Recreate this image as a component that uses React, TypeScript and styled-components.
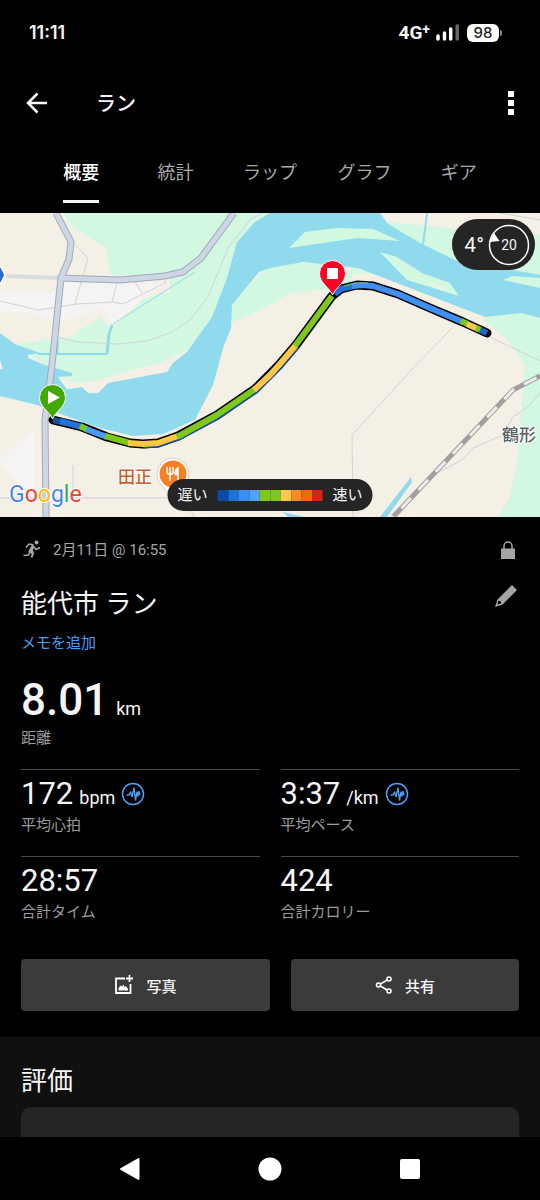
import React from 'react';
import styled, { createGlobalStyle } from 'styled-components';

const sans = `Roboto, "Noto Sans CJK JP", sans-serif`;

const GlobalStyle = createGlobalStyle`
  *, *::before, *::after { box-sizing: border-box; }
  body { margin: 0; background: #000; color: #f5f5f5; font-family: ${sans}; }
  button { font: inherit; color: inherit; border: 0; padding: 0; background: none; cursor: pointer; }
  svg { display: block; flex: none; }
  h1, h2, p, dl, dd, dt { margin: 0; font-weight: 400; }
`;

const Screen = styled.div`
  display: flex;
  flex-direction: column;
  min-height: 100vh;
`;

/* Status bar */
const StatusBar = styled.div`
  display: flex;
  align-items: center;
  justify-content: space-between;
  height: 66px;
  padding: 0 38px 0 29px;
`;
const Clock = styled.time`
  font: 600 18px/20px Inter, ${sans};
`;
const StatusIcons = styled.div`
  display: flex;
  align-items: center;
`;
const Network = styled.span`
  font-size: 19px;
  line-height: 20px;
  font-weight: 700;
  margin-right: 6px;
  sup { font-size: 14px; line-height: 0; vertical-align: 5px; }
`;
const Battery = styled.span`
  display: flex;
  align-items: center;
  gap: 1px;
  margin-left: 7px;
  &::after { content: ''; width: 2px; height: 6px; border-radius: 0 2px 2px 0; background: #888; }
`;
const BatteryLevel = styled.span`
  width: 32px;
  height: 18px;
  border-radius: 6px;
  background: #fff;
  color: #222;
  font: 500 15px/18px Inter, ${sans};
  text-align: center;
`;

/* App bar */
const AppBar = styled.header`
  display: flex;
  align-items: center;
  height: 74px;
  padding: 0 17px 0 25px;
`;
const IconButton = styled.button<{ $w?: number }>`
  display: grid;
  place-items: center;
  width: ${(p) => p.$w ?? 24}px;
  height: 24px;
`;
const AppTitle = styled.h1`
  flex: 1;
  margin-left: 47px;
  padding-top: 2px;
  font-size: 20px;
  line-height: 28px;
  font-weight: 500;
`;

/* Tabs */
const Tabs = styled.nav`
  display: grid;
  grid-template-columns: repeat(5, 1fr);
  height: 73px;
  padding: 18px 34px 10px;
`;
const Tab = styled.button<{ $active?: boolean }>`
  justify-self: center;
  display: flex;
  flex-direction: column;
  justify-content: space-between;
  font-size: 18px;
  line-height: 30px;
  font-weight: ${(p) => (p.$active ? 500 : 400)};
  color: ${(p) => (p.$active ? '#fff' : '#a9a9a9')};
  &::after {
    content: '';
    width: 100%;
    height: 3px;
    background: ${(p) => (p.$active ? '#f5f5f5' : 'transparent')};
  }
`;

/* Map */
const MapArea = styled.section`
  position: relative;
  height: 304px;
  overflow: hidden;
  background: #f5f0e5;
`;
const MapCanvas = styled.svg`
  width: 100%;
  height: 100%;
`;
const Weather = styled.div`
  position: absolute;
  top: 6px;
  right: 5px;
  display: flex;
  align-items: center;
  gap: 4px;
  height: 51px;
  padding: 0 5px 0 12px;
  border-radius: 26px;
  background: #252525;
  font-size: 21px;
`;
const Legend = styled.div`
  position: absolute;
  bottom: 6px;
  left: 50%;
  transform: translateX(-50%);
  display: flex;
  align-items: center;
  gap: 10px;
  height: 32px;
  padding: 0 10px;
  border-radius: 16px;
  background: #252525;
  font-size: 15px;
  line-height: 24px;
  white-space: nowrap;
`;
const Scale = styled.div`
  display: flex;
  width: 105px;
  height: 11px;
`;
const Swatch = styled.span<{ $c: string }>`
  flex: 1;
  background: ${(p) => p.$c};
`;

/* Activity summary */
const Summary = styled.main`
  padding: 21px 21px 26px;
`;
const Row = styled.div`
  display: flex;
  align-items: center;
`;
const DateText = styled.p`
  flex: 1;
  margin-left: 10px;
  font-size: 15px;
  line-height: 24px;
  color: #a6a6a6;
`;
const TitleRow = styled(Row)`
  align-items: flex-start;
  margin-top: 22px;
`;
const Title = styled.h2`
  flex: 1;
  padding-top: 2px;
  font-size: 26px;
  line-height: 36px;
`;
const MemoLink = styled.a`
  display: block;
  width: max-content;
  margin-top: 9px;
  font-size: 15px;
  line-height: 24px;
  color: #4d9ff5;
  text-decoration: none;
`;
const Metric = styled.div`
  display: flex;
  flex-direction: column-reverse;
`;
const Label = styled.dt`
  font-size: 15px;
  line-height: 24px;
  color: #9c9c9c;
`;
const Value = styled.dd<{ $big?: boolean }>`
  display: flex;
  align-items: baseline;
  gap: ${(p) => (p.$big ? 8 : 6)}px;
  font-size: ${(p) => (p.$big ? 44 : 31)}px;
  line-height: ${(p) => (p.$big ? 48 : 38)}px;
  font-weight: ${(p) => (p.$big ? 500 : 400)};
  svg { align-self: center; }
`;
const Unit = styled.span`
  font-size: 18px;
  line-height: 24px;
  font-weight: 400;
`;
const Distance = styled.dl`
  margin: 21px 0 19px;
  dt { margin-top: 2px; }
`;
const Metrics = styled.dl`
  display: grid;
  grid-template-columns: 1fr 1fr;
  column-gap: 21px;
`;
const Cell = styled(Metric)`
  padding: 5px 0 19px;
  border-top: 1px solid #4a4a4a;
`;
const Actions = styled.div`
  display: flex;
  gap: 21px;
  margin-top: 16px;
`;
const Action = styled.button<{ $grow: number }>`
  flex: ${(p) => p.$grow} 1 0;
  display: flex;
  align-items: center;
  justify-content: center;
  gap: 12px;
  height: 52px;
  border-radius: 4px;
  background: #3b3b3b;
  font-size: 15px;
  font-weight: 500;
`;

/* Rating section */
const Rating = styled.section`
  flex: 1;
  display: flex;
  flex-direction: column;
  padding: 24px 21px 0;
  background: #101010;
`;
const RatingTitle = styled(Title)`
  flex: none;
`;
const RatingCard = styled.div`
  flex: 1;
  min-height: 30px;
  margin-top: 8px;
  border-radius: 10px 10px 0 0;
  background: #252525;
`;

/* System navigation */
const SystemNav = styled.nav`
  display: flex;
  justify-content: center;
  align-items: center;
  gap: 116px;
  height: 63px;
`;

const scale = ['#0b4ba3', '#1a73d8', '#3a8ff5', '#52a2ff', '#7dc81b', '#7dc81b', '#fbca4b', '#fb8b2a', '#ee6908', '#d6211d'];

const track: [string, string][] = [
  ['#174f9f', '53,207 66,210'],
  ['#2173d8', '60,208 82,214'],
  ['#7dc81b', '80,213 88,217'],
  ['#4b9bf9', '86,216 107,224'],
  ['#7dc81b', '105,223 130,230'],
  ['#fbc846', '128,230 143,231 158,230 178,223'],
  ['#7dc81b', '177,224 217,202 255,176'],
  ['#fbc846', '254,177 270,162 279,152 296,132'],
  ['#7dc81b', '295,133 332,83'],
  ['#2173d8', '335,81 341,76 349,74 357,72'],
  ['#3f90f2', '352,73 362,72 373,73 398,81 430,95 463,109'],
  ['#7dc81b', '461,108 468,111'],
  ['#fbc846', '467,111 478,116'],
  ['#7dc81b', '476,115 481,117'],
  ['#1c66c4', '480,117 487,120'],
];
const route =
  '53,207 82,214 107,224 130,230 143,231 158,230 178,223 217,202 255,176 279,152 296,132 332,83 341,76 357,72 373,73 398,81 430,95 463,109 487,120';

function ActivityMap() {
  return (
    <MapCanvas viewBox="0 0 540 304" preserveAspectRatio="xMidYMid slice" role="img" aria-label="ルートマップ">
      <rect width="540" height="304" fill="#f5f0e5" />
      {/* urban land */}
      <path d="M0 79H57L64 70H170L143 84 113 115 100 95 57 111 33 100 0 99ZM35 214V285L10 262 0 252V246Z" fill="#f5f3f4" />
      {/* woodland */}
      <g fill="#d3f8e2">
        <path d="M63 0H270L237 40 213 104 187 137 160 150 90 169 72 171 45 152 17 130 68 125 101 104 110 117 143 86 170 78V64L110 62 106 35 72 14Z" />
        <path d="M232 92V110L270 92 290 80 320 77 358 76 345 50 270 50Z" />
        <path d="M388 9 452 15 540 22V80L420 60ZM485 100H540V304H498L510 284 517 247 525 152 510 130 485 107ZM350 50 380 60 350 62Z" />
      </g>
      {/* river */}
      <g fill="#90daee">
        <path d="M0 120 15 131 40 140 28 142V145L45 152 72 160V163L58 164 67 176 82 174 88 180 98 180 108 170 167 159 173 150 187 139 212 104 227 65 237 29 255 9 270 0H380L387 10 403 20 422 31 455 47 540 62V105L522 100 485 104 358 55 303 49 270 55 259 59 232 92 231 115 223 135 218 154 213 172 195 207 163 221 133 223 100 215 55 199 37 192 0 183Z" />
        <path d="M411 264 380 304H387L412 269ZM283 299 304 304H288Z" />
      </g>
      <path d="M0 147V156H3ZM90 171 160 150 168 148 166 158 108 169 97 179 88 179 82 174 67 176 60 167Z" fill="#f5f0e5" />
      <path d="M289 35 305 19 337 15 373 16 400 28 357 25ZM380 39 397 44 422 60 450 70 459 83 407 67ZM503 67 512 63 540 65V75Z" fill="#d3f8e2" />
      <path d="M424 68 434 71 444 75 443 78Z" fill="#f5f0e5" />
      <g fill="none" stroke="#90daee">
        <path d="M195 59 113 111" strokeWidth="1" />
        <path d="M112 112 109 121 107 141M57 126V140" strokeWidth="3" />
        <path d="M108 141H38" strokeWidth="2" />
        <path d="M427 0 423 32" strokeWidth="2" />
      </g>
      {/* minor roads */}
      <g fill="none" stroke="#d0d1db" strokeWidth="1">
        <path d="M75 32 88 45 75 91M0 88 38 97 77 91 113 89 123 91 165 70V67M117 70 112 89M135 69 142 80" />
        <path d="M57 124 78 129 117 131 147 128 170 120 190 107 208 84 228 35 250 7 262 0" />
        <path d="M73 252V285M0 285H170M191 298 194 304" />
        <path d="M452 115 416 152 352 222 353 304M490 124 540 148M500 0 540 7" />
        <path d="M540 180 527 195 513 204 503 222 473 235 462 247 437 260" />
      </g>
      {/* main roads */}
      <path d="M6 63 61 65" fill="none" stroke="#d9dadb" strokeWidth="4" />
      {[
        ['#9faabb', 7],
        ['#cdd7e3', 5],
      ].map(([c, w]) => (
        <path
          key={c}
          d="M56 0 71 29 69 46 61 65 52 152 45 207 46 304M61 65 120 67 165 63 183 59 201 45 234 0"
          fill="none"
          stroke={c}
          strokeWidth={w}
        />
      ))}
      <path d="M-6 54H1L5 62 1 70H-6Z" fill="#2b6cd0" stroke="#fff" strokeWidth="1.5" />
      {/* railway */}
      <path d="M540 163 513 177 393 304" fill="none" stroke="#a0a0a0" strokeWidth="5" />
      <path d="M540 163 513 177 393 304" fill="none" stroke="#ececec" strokeWidth="3" strokeDasharray="14 11" strokeDashoffset="-4" />
      {/* route */}
      <polyline points={route} fill="none" stroke="#000" strokeWidth="9" strokeLinejoin="round" strokeLinecap="round" />
      <polyline points="143,233 158,232 179,225 218,204 256,178 280,154 297,134" fill="none" stroke="#174f9f" strokeWidth="5" />
      {track.map(([c, p]) => (
        <polyline key={p} points={p} fill="none" stroke={c} strokeWidth="6" strokeLinejoin="round" />
      ))}
      <polyline points="344,73 357,70 368,70" fill="none" stroke="#7dc81b" strokeWidth="1" />
      {/* labels */}
      <g fontFamily={sans} paintOrder="stroke" stroke="#fff" strokeWidth="2" strokeLinejoin="round">
        <text x="118" y="270" fontSize="17" fontWeight="500" fill="#c8622a">田正</text>
        <text x="502" y="228" fontSize="17" fontWeight="500" fill="#5c6368">鶴形</text>
        <text x="9" y="289" fontSize="23" fontWeight="400">
          <tspan fill="#4285f4">G</tspan>
          <tspan fill="#ea4335">o</tspan>
          <tspan fill="#fbbc05">o</tspan>
          <tspan fill="#4285f4">g</tspan>
          <tspan fill="#34a853">l</tspan>
          <tspan fill="#ea4335">e</tspan>
        </text>
      </g>
      {/* restaurant */}
      <path d="M173 245a16 16 0 0 1 16 16c0 9-7 13-16 24-9-11-16-15-16-24a16 16 0 0 1 16-16Z" fill="#fff" stroke="#d5d0c8" strokeWidth="1" />
      <circle cx="173" cy="261" r="13.5" fill="#fb7f22" />
      <path d="M167 254v4.500a3 3 0 0 0 6 0V254M170 254v14M178 268v-13c-2.500 1-3 3-3 6.500h3" fill="none" stroke="#fff" strokeWidth="1.600" />
      <path d="M178 255c-2.500 1-3 3-3 6.500h3Z" fill="#fff" />
      {/* start and finish pins */}
      <path d="M52.500 206C49 198 39.500 194 39.500 184.500a13 13 0 0 1 26 0C65.500 194 56 198 52.500 206Z" fill="#43a800" stroke="#fff" strokeWidth="1" />
      <path d="M48 178v13l12-6.500Z" fill="#fff" />
      <path d="M332.500 82C329 74 319.500 70 319.500 60.500a13 13 0 0 1 26 0C345.500 70 336 74 332.500 82Z" fill="#fb0428" stroke="#fff" strokeWidth="1" />
      <path d="M327 55h11v11h-11Z" fill="#fff" />
    </MapCanvas>
  );
}

const PulseIcon = () => (
  <svg width="24" height="24" viewBox="0 0 24 24" fill="none" stroke="#4d9ff5" aria-hidden="true">
    <circle cx="12" cy="12" r="10.500" strokeWidth="1.500" />
    <path d="M5.500 13H8l1.500-3 1.500 4.500L13 6l1.500 12 1.500-8 1 4 1-4.500 .8 3.500" strokeWidth="1.400" strokeLinejoin="round" />
  </svg>
);

const metrics = [
  { label: '平均心拍', value: '172', unit: 'bpm', pulse: true },
  { label: '平均ペース', value: '3:37', unit: '/km', pulse: true },
  { label: '合計タイム', value: '28:57' },
  { label: '合計カロリー', value: '424' },
];

export default function App() {
  return (
    <Screen>
      <GlobalStyle />
      <StatusBar>
        <Clock>11:11</Clock>
        <StatusIcons>
          <Network>4G<sup>+</sup></Network>
          <svg width="24" height="18" viewBox="0 0 24 18" strokeWidth="3.500" strokeLinecap="round" stroke="#fff" aria-hidden="true">
            <path d="M2 12v3M8.500 9v6M14.700 5v10" />
            <path d="M21.200 2v13" stroke="#666" />
          </svg>
          <Battery><BatteryLevel>98</BatteryLevel></Battery>
        </StatusIcons>
      </StatusBar>

      <AppBar>
        <IconButton aria-label="戻る">
          <svg width="24" height="24" viewBox="0 0 24 24" fill="none" stroke="#fff" strokeWidth="2.500">
            <path d="M22 12H3.500M12.500 2.500 3 12l9.500 9.500" />
          </svg>
        </IconButton>
        <AppTitle>ラン</AppTitle>
        <IconButton aria-label="メニュー">
          <svg width="6" height="24" viewBox="0 0 6 24" fill="#fff">
            <path d="M0 0h6v6H0ZM0 9h6v6H0ZM0 18h6v6H0Z" />
          </svg>
        </IconButton>
      </AppBar>

      <Tabs>
        {['概要', '統計', 'ラップ', 'グラフ', 'ギア'].map((name, i) => (
          <Tab key={name} $active={i === 0}>{name}</Tab>
        ))}
      </Tabs>

      <MapArea>
        <ActivityMap />
        <Weather>
          <span>4°</span>
          <svg width="42" height="42" viewBox="0 0 42 42" aria-label="風速 20">
            <circle cx="21" cy="21" r="19.500" fill="none" stroke="#fff" strokeWidth="1.500" />
            <path d="M6 9 11.500 17 1.500 18Z" fill="#fff" />
            <text x="21" y="26" textAnchor="middle" fontSize="14" fontFamily={sans} fill="#f5f5f5">20</text>
          </svg>
        </Weather>
        <Legend>
          遅い
          <Scale>{scale.map((c, i) => <Swatch key={i} $c={c} />)}</Scale>
          速い
        </Legend>
      </MapArea>

      <Summary>
        <Row>
          <svg width="22" height="22" viewBox="0 0 22 22" fill="none" stroke="#a6a6a6" strokeWidth="2" aria-hidden="true">
            <circle cx="15.500" cy="3.500" r="2" fill="#a6a6a6" stroke="none" />
            <path d="M12.500 6.500 9.500 12l2.500 2" strokeWidth="3.500" />
            <path d="M12.500 5.700 8 5 5 8.500" strokeWidth="1.500" />
            <path d="M13.500 8.500 15 10.500l4-2" strokeWidth="1.500" />
            <path d="M12.500 13.500 10.500 18.500" />
            <path d="M9 12.500 7.500 16 2.500 16.500" strokeWidth="1.500" />
          </svg>
          <DateText>2月11日 @ 16:55</DateText>
          <IconButton $w={22} aria-label="公開設定">
            <svg width="14" height="18" viewBox="0 0 14 18">
              <path d="M3 8V5a4 4 0 0 1 8 0v3" fill="none" stroke="#a6a6a6" strokeWidth="1.500" />
              <path d="M0 7.500h14V18H0Z" fill="#a6a6a6" />
            </svg>
          </IconButton>
        </Row>
        <TitleRow>
          <Title>能代市 ラン</Title>
          <IconButton $w={26} aria-label="編集">
            <svg width="22" height="22" viewBox="0 0 22 22">
              <path d="M17 0 22 5 7.500 19.500 0 22 2.500 14.500ZM3.600 15.800 2.200 19.600 6.300 18.300 5.800 16.300Z" fill="#a6a6a6" fillRule="evenodd" />
            </svg>
          </IconButton>
        </TitleRow>
        <MemoLink href="#memo">メモを追加</MemoLink>

        <Distance>
          <Metric>
            <Label>距離</Label>
            <Value $big>8.01<Unit>km</Unit></Value>
          </Metric>
        </Distance>

        <Metrics>
          {metrics.map((m) => (
            <Cell key={m.label}>
              <Label>{m.label}</Label>
              <Value>
                {m.value}
                {m.unit && <Unit>{m.unit}</Unit>}
                {m.pulse && <PulseIcon />}
              </Value>
            </Cell>
          ))}
        </Metrics>

        <Actions>
          <Action $grow={249}>
            <svg width="20" height="20" viewBox="0 0 20 20" fill="none" stroke="#fff" strokeWidth="1.800" aria-hidden="true">
              <path d="M11 3.500H2V18h14.500V9" />
              <path d="M15.500 0v7M12 3.500h7" />
              <path d="M4.500 15.500v-2.500l2-2.500 1.500 1 1.500-2 1 2.500 1.500-1 2 3v1.500Z" fill="#fff" stroke="none" />
            </svg>
            写真
          </Action>
          <Action $grow={228}>
            <svg width="18" height="20" viewBox="0 0 18 20" fill="none" stroke="#fff" strokeWidth="1.600" aria-hidden="true">
              <circle cx="3.500" cy="10" r="2" />
              <circle cx="14" cy="4" r="2" />
              <circle cx="14" cy="16" r="2" />
              <path d="M5.300 9 12.200 5M5.300 11l6.900 4" />
            </svg>
            共有
          </Action>
        </Actions>
      </Summary>

      <Rating>
        <RatingTitle>評価</RatingTitle>
        <RatingCard />
      </Rating>

      <SystemNav>
        <IconButton aria-label="戻る">
          <svg width="24" height="24" viewBox="0 0 24 24">
            <path d="M3 12 20.500 2v20Z" fill="#fff" stroke="#fff" strokeWidth="2" strokeLinejoin="round" />
          </svg>
        </IconButton>
        <IconButton aria-label="ホーム">
          <svg width="24" height="24" viewBox="0 0 24 24"><circle cx="12" cy="12" r="11.500" fill="#fff" /></svg>
        </IconButton>
        <IconButton aria-label="履歴">
          <svg width="24" height="24" viewBox="0 0 24 24"><rect x="2" y="2" width="20" height="20" rx="2" fill="#fff" /></svg>
        </IconButton>
      </SystemNav>
    </Screen>
  );
}
